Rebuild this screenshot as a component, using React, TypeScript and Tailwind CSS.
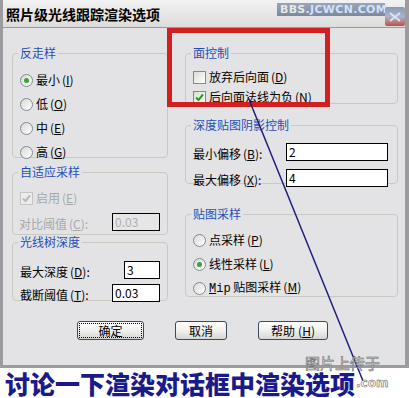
import React from 'react';

const font = { fontFamily: '"Noto Sans CJK SC", "Noto Sans", sans-serif' };

function Radio({ checked }: { checked?: boolean }) {
  return (
    <span className="w-[13px] h-[13px] rounded-full border border-[#7f8a94] bg-gradient-to-br from-[#d8d8d2] to-white flex items-center justify-center shrink-0">
      {checked && <span className="w-[5px] h-[5px] rounded-full bg-[#3aa23a]" />}
    </span>
  );
}

function Check({ checked, disabled }: { checked?: boolean; disabled?: boolean }) {
  return (
    <span
      className={`w-[13px] h-[13px] border flex items-center justify-center shrink-0 ${
        disabled ? 'border-[#c4c4c4] bg-[#ececec]' : 'border-[#7f8a94] bg-gradient-to-br from-[#dcdcd6] to-white'
      }`}
    >
      {checked && (
        <svg width="9" height="9" viewBox="0 0 9 9">
          <path d="M1 4.5 L3.5 7 L8 1.5" fill="none" stroke={disabled ? '#b8b8b8' : '#21a121'} strokeWidth="2" />
        </svg>
      )}
    </span>
  );
}

function Group({ title, h, children, className = '' }: { title: string; h: string; children: React.ReactNode; className?: string }) {
  return (
    <div className={`border border-[#c9c9c4] rounded-[4px] ${h} ${className}`}>
      <div className="-mt-[8px] ml-[5px] px-[2px] w-fit bg-[#e3e3e5] text-[#1f4fb8] text-[12px] leading-[14px]">{title}</div>
      {children}
    </div>
  );
}

function Label({ text, k, disabled }: { text: string; k: string; disabled?: boolean }) {
  return (
    <span className={`text-[12px] leading-[14px] ${disabled ? 'text-[#a8a8a8]' : 'text-black'}`}>
      {text}
      <span className="ml-[2px]">
        (<u>{k}</u>)
      </span>
    </span>
  );
}

function Input({ value, w, disabled }: { value: string; w: string; disabled?: boolean }) {
  return (
    <div
      className={`${w} h-[18px] border border-black px-[2px] text-[12px] leading-[16px] ${
        disabled ? 'bg-[#e6e6e6] text-[#b0b0b0]' : 'bg-white text-black'
      }`}
    >
      {value}
    </div>
  );
}

function Button({ children, w, focus }: { children: React.ReactNode; w: string; focus?: boolean }) {
  return (
    <div className={`${w} h-[19px] rounded-[3px] border border-[#3c4a5c] bg-gradient-to-b from-white via-[#f0f0ee] to-[#d6d6d4] p-[1px]`}>
      <div className={`h-full flex items-center justify-center text-[12px] text-black ${focus ? 'border border-dotted border-black' : ''}`}>
        {children}
      </div>
    </div>
  );
}

export default function App() {
  return (
    <div className="w-[409px] h-[398px] bg-white relative overflow-hidden" style={font}>
      <div className="w-[409px] h-[368px] border-l-[3px] border-r-[4px] border-b-[3px] border-[#9c9ca0] bg-[#e3e3e5] flex flex-col">
        {/* title bar */}
        <div className="h-[28px] shrink-0 bg-gradient-to-b from-[#f2f2f2] to-[#dcdcdc] border-b border-[#9a9a9a] flex items-center pl-[3px]">
          <span className="text-[14px] font-bold text-black leading-[16px]">照片级光线跟踪渲染选项</span>
          <div className="ml-auto mr-[20px] -mt-[8px] h-[13px] w-[108px] px-[3px] flex items-center bg-gradient-to-b from-[#9aa6b8] to-[#7c889c] text-[11px] font-bold leading-none tracking-[0.3px]" style={{ fontFamily: '"DejaVu Sans", sans-serif' }}>
            <span className="text-[#e8e8e8]">BBS.</span>
            <span className="text-[#cfe2ff]">JCWCN.COM</span>
          </div>
        </div>

        {/* body */}
        <div className="flex pl-[9px] pt-[25px] gap-[17px]">
          <div className="w-[156px] flex flex-col">
            <Group title="反走样" h="h-[105px]">
              <div className="pt-[8px] pl-[7px] flex flex-col">
                <div className="h-[24px] flex items-center gap-[3px]"><Radio checked /><Label text="最小" k="I" /></div>
                <div className="h-[24px] flex items-center gap-[3px]"><Radio /><Label text="低" k="O" /></div>
                <div className="h-[24px] flex items-center gap-[3px]"><Radio /><Label text="中" k="E" /></div>
                <div className="h-[24px] flex items-center gap-[3px]"><Radio /><Label text="高" k="G" /></div>
              </div>
            </Group>
            <Group title="自适应采样" h="h-[63px]" className="mt-[14px]">
              <div className="pt-[7px] pl-[7px] pr-[7px] flex flex-col">
                <div className="h-[24px] flex items-center gap-[3px]"><Check checked disabled /><Label text="启用" k="E" disabled /></div>
                <div className="h-[24px] flex items-center justify-between">
                  <span className="-ml-[1px]"><Label text="对比阈值" k="C" disabled /><span className="text-[12px] text-[#a8a8a8]">:</span></span>
                  <Input value="0.03" w="w-[48px]" disabled />
                </div>
              </div>
            </Group>
            <Group title="光线树深度" h="h-[59px]" className="mt-[7px]">
              <div className="pt-[9px] pl-[7px] pr-[7px] flex flex-col">
                <div className="h-[23px] flex items-center justify-between">
                  <span><Label text="最大深度" k="D" /><span className="text-[12px]">:</span></span>
                  <Input value="3" w="w-[36px]" />
                </div>
                <div className="h-[23px] flex items-center justify-between">
                  <span><Label text="截断阈值" k="T" /><span className="text-[12px]">:</span></span>
                  <Input value="0.03" w="w-[48px]" />
                </div>
              </div>
            </Group>
          </div>

          <div className="w-[213px] flex flex-col">
            <Group title="面控制" h="h-[51px]">
              <div className="pt-[7px] pl-[7px] flex flex-col">
                <div className="h-[20px] flex items-center gap-[3px]"><Check /><Label text="放弃后向面" k="D" /></div>
                <div className="h-[20px] flex items-center gap-[3px]"><Check checked /><Label text="后向面法线为负" k="N" /></div>
              </div>
            </Group>
            <Group title="深度贴图阴影控制" h="h-[59px]" className="mt-[21px]">
              <div className="pt-[7px] pl-[7px] pr-[9px] flex flex-col">
                <div className="h-[26px] flex items-center justify-between">
                  <span><Label text="最小偏移" k="B" /><span className="text-[12px]">:</span></span>
                  <Input value="2" w="w-[102px]" />
                </div>
                <div className="h-[26px] flex items-center justify-between">
                  <span><Label text="最大偏移" k="X" /><span className="text-[12px]">:</span></span>
                  <Input value="4" w="w-[102px]" />
                </div>
              </div>
            </Group>
            <Group title="贴图采样" h="h-[83px]" className="mt-[30px]">
              <div className="pt-[7px] pl-[7px] flex flex-col">
                <div className="h-[24px] flex items-center gap-[3px]"><Radio /><Label text="点采样" k="P" /></div>
                <div className="h-[24px] flex items-center gap-[3px]"><Radio checked /><Label text="线性采样" k="L" /></div>
                <div className="h-[24px] flex items-center gap-[3px]">
                  <Radio />
                  <span className="text-[12px] leading-[14px] text-black">
                    <span style={{ fontFamily: '"Liberation Mono", monospace' }}><u>M</u>ip</span> 贴图采样<span className="ml-[2px]">(<u>M</u>)</span>
                  </span>
                </div>
              </div>
            </Group>
          </div>
        </div>

        {/* buttons */}
        <div className="flex justify-center gap-[31px] mt-[20px] pr-[3px]">
          <Button w="w-[67px]" focus>确定</Button>
          <Button w="w-[52px]">取消</Button>
          <Button w="w-[70px]">
            帮助<span className="ml-[3px]">(<u>H</u>)</span>
          </Button>
        </div>
      </div>

      {/* bottom caption */}
      <div className="pl-[5px] h-[30px] flex items-center text-[25px] font-black text-[#1a1a8a] leading-[28px]">
        讨论一下渲染对话框中渲染选项
      </div>

      {/* close box */}
      <div className="absolute left-[385px] top-[7px] w-[20px] h-[19px] rounded-[2px] bg-gradient-to-b from-[#8a9ab2] via-[#a8b4c8] to-[#c04848] flex items-center justify-center">
        <svg width="12" height="10" viewBox="0 0 12 10">
          <path d="M1 1 L11 9 M11 1 L1 9" stroke="#d8e4f4" strokeWidth="2" />
        </svg>
      </div>

      {/* red annotation box */}
      <div className="absolute left-[167px] top-[28px] w-[163px] h-[79px] border-[5px] border-[#d21f1f]" />

      {/* annotation line */}
      <svg className="absolute left-0 top-0" width="409" height="398">
        <line x1="248" y1="97" x2="363" y2="381" stroke="#1f1f78" strokeWidth="1.5" />
      </svg>

      {/* watermark */}
      <div className="absolute left-[305px] top-[355px] text-[15px] leading-[16px] text-[#f2f2f2]" style={{ WebkitTextStroke: '0.6px #6a6a6a' }}>
        图片上传于
      </div>
      <div className="absolute left-[356px] top-[376px] text-[12px] leading-[14px] font-bold text-[#f0f0f0]" style={{ WebkitTextStroke: '0.5px #555', fontFamily: '"DejaVu Sans", sans-serif' }}>
        .com
      </div>
    </div>
  );
}
